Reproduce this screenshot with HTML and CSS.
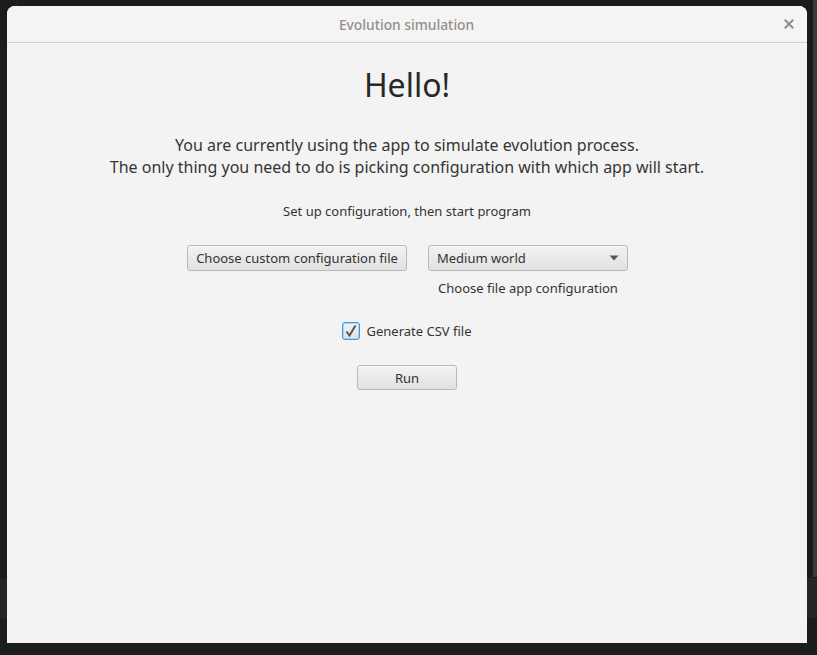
FILE: index.html
```html
<!DOCTYPE html>
<html>
<head>
<meta charset="utf-8">
<link rel="stylesheet" href="styles.css">
</head>
<body>
<div class="desktop">
  <div class="bg-line"></div>
  <div class="bg-band"></div>
  <div class="bg-right"></div>
  <div class="window">
    <div class="titlebar">
      <span class="title">Evolution simulation</span>
      <span class="close">
        <svg width="10" height="10" viewBox="0 0 10 10"><path d="M1.5 1.5 L8.5 8.5 M8.5 1.5 L1.5 8.5" stroke="#8e8e8e" stroke-width="2" stroke-linecap="square"/></svg>
      </span>
    </div>
    <div class="content">
      <h1 class="hello">Hello!</h1>
      <p class="intro">You are currently using the app to simulate evolution process.<br>The only thing you need to do is picking configuration with which app will start.</p>
      <p class="hint">Set up configuration, then start program</p>
      <div class="row">
        <button class="btn btn-file">Choose custom configuration file</button>
        <div class="combo-col">
          <div class="combo">
            <span>Medium world</span>
            <svg width="10" height="6" viewBox="0 0 10 6"><path d="M0.5 0.5 L9.5 0.5 L5 5.5 Z" fill="#555"/></svg>
          </div>
          <div class="combo-label">Choose file app configuration</div>
        </div>
      </div>
      <label class="check">
        <span class="box">
          <svg width="14" height="14" viewBox="0 0 14 14"><path d="M2.5 7.5 L5.5 11.5 L11.5 1.5" fill="none" stroke="#555" stroke-width="2"/></svg>
        </span>
        <span>Generate CSV file</span>
      </label>
      <button class="btn btn-run">Run</button>
    </div>
  </div>
</div>
</body>
</html>
```

FILE: styles.css
```css
html, body {
  margin: 0;
  padding: 0;
}
body {
  background: #1b1c1e;
  width: 817px;
  height: 655px;
  overflow: hidden;
  font-family: "Noto Sans", "Open Sans", sans-serif;
}
.desktop {
  position: relative;
  width: 817px;
  height: 655px;
  padding-top: 6px;
  box-sizing: border-box;
}
.bg-line {
  position: absolute;
  left: 17px;
  top: 0;
  width: 1px;
  height: 6px;
  background: #2a2b2e;
}
.bg-band {
  position: absolute;
  left: 0;
  top: 578px;
  width: 817px;
  height: 40px;
  background: #232527;
}
.bg-right {
  position: absolute;
  left: 813px;
  top: 0;
  width: 4px;
  height: 577px;
  background: #3a3b3e;
}
.window {
  position: relative;
  margin-left: 7px;
  width: 800px;
  height: 637px;
  display: flex;
  flex-direction: column;
  background: #f3f3f3;
  border-radius: 8px 8px 0 0;
  overflow: hidden;
}
.titlebar {
  height: 36px;
  flex: none;
  background: #f5f4f2;
  border-bottom: 1px solid #d3d2cf;
  display: flex;
  align-items: center;
  justify-content: center;
  position: relative;
}
.title {
  font-family: "Noto Sans", sans-serif;
  font-size: 15px;
  font-weight: 500;
  color: #8f8f8f;
  display: inline-block;
  transform: scaleX(0.92);
  margin-top: -1px;
}
.close {
  position: absolute;
  right: 13px;
  top: 13px;
  width: 10px;
  height: 10px;
  display: flex;
}
.content {
  flex: 1;
  display: flex;
  flex-direction: column;
  align-items: center;
  color: #333;
}
.hello {
  margin: 22px 0 0;
  font-size: 32px;
  font-weight: normal;
  line-height: 40px;
  color: #282828;
}
.intro {
  margin: 29px 0 0;
  font-size: 16px;
  line-height: 22px;
  text-align: center;
  color: #353535;
}
.hint {
  margin: 24px 0 0;
  font-size: 13px;
  line-height: 18px;
  color: #333;
}
.row {
  margin-top: 25px;
  display: flex;
  gap: 21px;
  align-items: flex-start;
  margin-left: 1px;
}
.btn {
  font-family: "Noto Sans", "Open Sans", sans-serif;
  font-size: 13px;
  color: #333;
  height: 26px;
  padding: 0;
  border: 1px solid #b9b9b9;
  border-radius: 3px;
  background: linear-gradient(#f2f2f2, #e1e1e1);
  box-shadow: inset 0 1px 0 #fafafa;
}
.btn-file {
  width: 220px;
}
.combo-col {
  display: flex;
  flex-direction: column;
  align-items: center;
}
.combo {
  box-sizing: border-box;
  width: 200px;
  height: 26px;
  border: 1px solid #b9b9b9;
  border-radius: 3px;
  background: linear-gradient(#f2f2f2, #e1e1e1);
  box-shadow: inset 0 1px 0 #fafafa;
  display: flex;
  align-items: center;
  justify-content: space-between;
  padding: 0 8px 0 8px;
  font-size: 13px;
  color: #333;
}
.combo-label {
  margin-top: 8px;
  font-size: 13px;
  line-height: 18px;
  color: #333;
}
.check {
  margin-top: 25px;
  display: flex;
  align-items: center;
  gap: 6px;
  font-size: 13px;
  color: #333;
}
.box {
  box-sizing: border-box;
  width: 18px;
  height: 18px;
  border: 1px solid #3d9be0;
  border-radius: 3px;
  background: linear-gradient(#f2f2f2, #e2e2e2);
  box-shadow: 0 0 0 1px #a9d3f2 inset;
  display: flex;
  align-items: center;
  justify-content: center;
}
.btn-run {
  margin-top: 25px;
  width: 100px;
  height: 25px;
}
```
